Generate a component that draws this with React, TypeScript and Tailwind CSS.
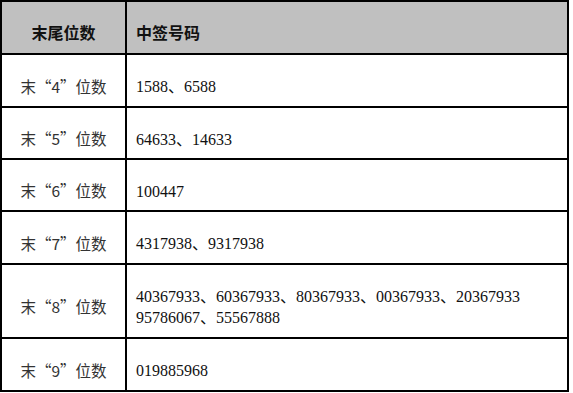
import React from "react";

const cjk = { fontFamily: '"Noto Sans CJK SC", sans-serif' };

const rows: { d: string; lines: string[]; h: string }[] = [
  { d: "4", lines: ["1588、6588"], h: "h-[53px]" },
  { d: "5", lines: ["64633、14633"], h: "h-[52px]" },
  { d: "6", lines: ["100447"], h: "h-[52px]" },
  { d: "7", lines: ["4317938、9317938"], h: "h-[53px]" },
  {
    d: "8",
    lines: [
      "40367933、60367933、80367933、00367933、20367933",
      "95786067、55567888",
    ],
    h: "h-[74px]",
  },
  { d: "9", lines: ["019885968"], h: "h-[53px]" },
];

export default function App() {
  return (
    <div className="w-[573px] h-[393px] bg-white">
      <div className="w-[569px] border-l-2 border-t-2 border-black">
        <div className="flex h-[53px] bg-[#c0c0c0] border-b-2 border-black">
          <div
            className="w-[125px] border-r-2 border-black flex items-center justify-center pt-[9px] text-[16px] font-bold text-[#111]"
            style={cjk}
          >
            末尾位数
          </div>
          <div
            className="flex-1 border-r-2 border-black flex items-center pl-[9px] pt-[9px] text-[16px] font-bold text-[#111]"
            style={cjk}
          >
            中签号码
          </div>
        </div>
        {rows.map((r) => (
          <div key={r.d} className={`flex ${r.h} border-b-2 border-black`}>
            <div
              className="w-[125px] border-r-2 border-black flex items-center justify-center pt-[12px] text-[15.5px] text-[#333]"
              style={cjk}
            >
              <span>末</span>
              <span className="inline-block w-[1em] text-right">“</span>
              <span>{r.d}</span>
              <span className="inline-block w-[1em] text-left">”</span>
              <span>位数</span>
            </div>
            <div
              className="flex-1 border-r-2 border-black flex flex-col justify-center pl-[9px] pt-[12px] text-[16px] leading-[21px] text-[#111]"
              style={{ fontFamily: '"Liberation Serif", "Noto Sans CJK SC", serif' }}
            >
              {r.lines.map((l) => (
                <div key={l}>{l}</div>
              ))}
            </div>
          </div>
        ))}
      </div>
    </div>
  );
}
